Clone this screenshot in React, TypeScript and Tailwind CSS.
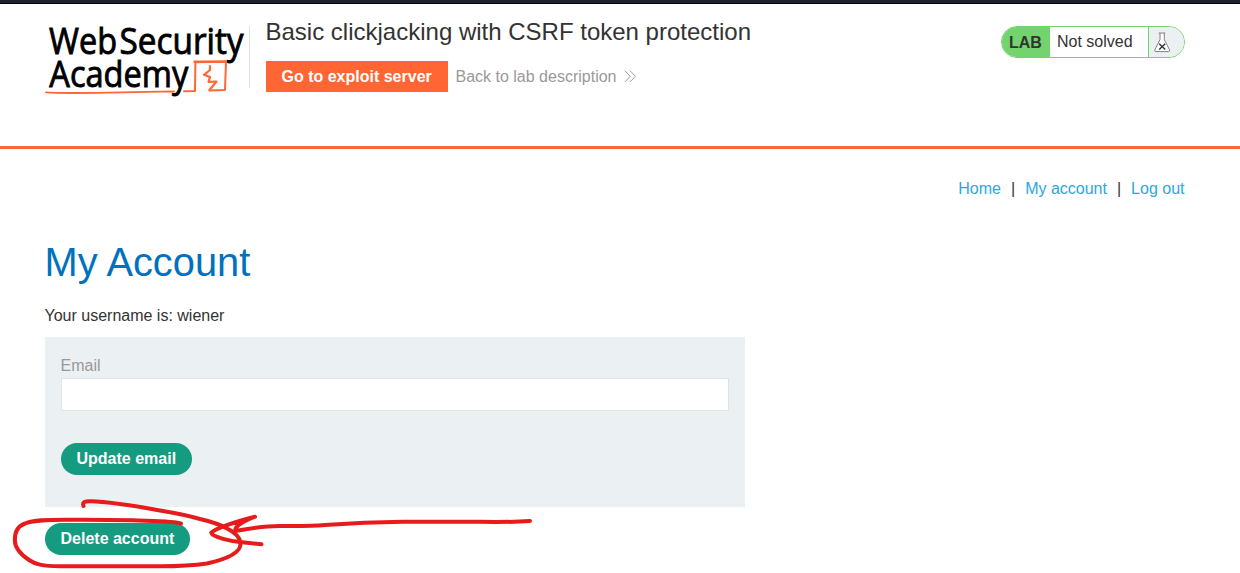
function Logo() {
  return (
    <svg className="block shrink-0 overflow-visible" width="204" height="80" viewBox="45 20 204 80" fill="none" role="img">
      <g fill="#000" stroke="#000" strokeWidth=".9" fontFamily="Open Sans, Noto Sans, sans-serif" fontWeight="500" fontSize="36">
        <text x="49" y="54" textLength="68" lengthAdjust="spacingAndGlyphs">Web</text>
        <text x="119.5" y="54" textLength="124" lengthAdjust="spacingAndGlyphs">Security</text>
        <text x="49.3" y="86.7" textLength="139" lengthAdjust="spacingAndGlyphs">Academy</text>
      </g>
      <g stroke="#ff6633" strokeLinejoin="round" strokeLinecap="round">
        <path d="M46 92.4C60 93.4 84 93 110 92.6C145 91.8 155 91.7 174 91.5" strokeWidth="1.9" />
        <path d="M184 91.2L195 91L195.4 62.2L226 61.6L225 90L209.5 90.5" strokeWidth="2" />
        <path d="M194.5 61.7L226 61.6" strokeWidth="2.4" />
        <path d="M210 66L210 70L204 74.8L210 77L208.5 81.8L216.5 81.5L209.5 90" strokeWidth="2.2" />
      </g>
    </svg>
  );
}

function LabStatus() {
  return (
    <div className="mt-[22px] flex h-8 w-[184px] overflow-hidden rounded-2xl border border-[#72d36f] bg-white text-[#333332]">
      <span className="flex w-12 items-center bg-[#72d36f] pl-[7px] pt-px font-bold">LAB</span>
      <span className="flex w-[98px] items-center pl-[7px] pb-[1px]">Not solved</span>
      <span className="flex flex-1 items-center border-l border-[#72d36f] bg-[#ebf0f2] pl-[5px]">
        <svg width="17" height="21" viewBox="0 0 17 21" fill="none">
          <path d="M4.8 1H11.2M6 1V7.5L.8 18Q.5 19.6 2 19.6H14.5Q16 19.6 15.6 18L10.3 7.5V1" fill="#fff" stroke="#777" strokeWidth=".9" />
          <path d="M5.2 11.8L11.2 17.6M11.2 11.8L5.2 17.6" stroke="#333" strokeWidth="1.4" />
        </svg>
      </span>
    </div>
  );
}

function PillButton({ children, className }: { children: string; className: string }) {
  return (
    <button type="button" className={"block h-8 rounded-full bg-[#159b80] pb-[1px] text-left pl-[15.5px] font-bold text-white " + className}>
      {children}
    </button>
  );
}

function Annotation() {
  return (
    <svg className="pointer-events-none absolute left-0 top-[490px]" width="560" height="83" viewBox="0 490 560 83" fill="none" stroke="#e71b1b" strokeWidth="4" strokeLinecap="round" strokeLinejoin="round">
      <path d="M83.5 506C82 502 85 501 91 501.2C115 502 135 506 160 510.5C175 513 188 515.5 200 519C213 522 221 525 227 528.5C236 533 240.5 538 240.5 544C240.5 553 227 559 207 563.5C190 566 180 566.3 160 566.3H60C42 566.3 35 564 29 560C20 554 14.8 548 14.8 540C14.8 531 18 526 25 523.5C33 520 47 519.7 67 519.7C95 519.5 115 519.8 133 520.3C150 521 175 521 181 523.5" />
      <path d="M530 521C500 523 480 521.5 460 521.7H403C375 521.8 350 523 325 525C310 526.3 295 526 280 526C262 526 252 528 235 531C235 525 245 521 255 516.7C234 522 214 529 211.2 532.7C212 537 230 541 240 542L261.5 544.3" />
    </svg>
  );
}

export default function App() {
  return (
    <div className="relative h-[573px] overflow-hidden bg-white text-base leading-[18px] text-[#333332] [font-family:'Liberation_Sans',Arial,sans-serif]">
      <div className="h-1 border-b border-black bg-[#20212f]" />
      <header className="flex h-[145px] items-start border-b-[3px] border-[#ff6633] pl-[45px] pr-[55px]">
        <div className="mt-4 flex">
          <Logo />
          <div className="mt-[6px] h-[62px] w-px bg-[#e0e0e0]" />
        </div>
        <div className="ml-[15.5px] mt-[14px] flex-1">
          <h2 className="text-2xl leading-7 whitespace-nowrap">Basic clickjacking with CSRF token protection</h2>
          <div className="mt-[15px] flex items-center">
            <a className="flex h-[31px] w-[182px] items-center bg-[#ff6633] pl-4 font-bold text-white">Go to exploit server</a>
            <a className="ml-2 flex items-center text-[#999]">
              Back to lab description
              <svg className="ml-2" width="13" height="14" viewBox="0 0 13 14" fill="none" stroke="#999">
                <path d="M.8 .7L6.3 6.3L.8 11.9M6 .7L11.5 6.3L6 11.9" />
              </svg>
            </a>
          </div>
        </div>
        <LabStatus />
      </header>
      <main className="pl-[44.5px] pr-[55.5px]">
        <nav className="mt-[31px] flex justify-end text-[#29a9e0]">
          <a>Home</a>
          <span className="mx-[10px] text-[#333332]">|</span>
          <a>My account</a>
          <span className="mx-[10px] text-[#333332]">|</span>
          <a>Log out</a>
        </nav>
        <h1 className="mt-10 text-[39.8px] leading-[48px] text-[#0071bc]">My Account</h1>
        <p className="mt-[21px]">Your username is: wiener</p>
        <form className="ml-[0.5px] mt-3 h-[170px] w-[700px] bg-[#ebf0f2] px-4 pt-5">
          <label htmlFor="email" className="-ml-[0.5px] block text-[#999]">Email</label>
          <input id="email" type="email" className="mt-[3px] block h-[33px] w-full border border-[#e0e3e4] bg-white px-2 outline-none" />
          <PillButton className="mt-8 w-[131px]">Update email</PillButton>
        </form>
        <PillButton className="ml-[0.5px] mt-4 w-[145px]">Delete account</PillButton>
      </main>
      <Annotation />
    </div>
  );
}
